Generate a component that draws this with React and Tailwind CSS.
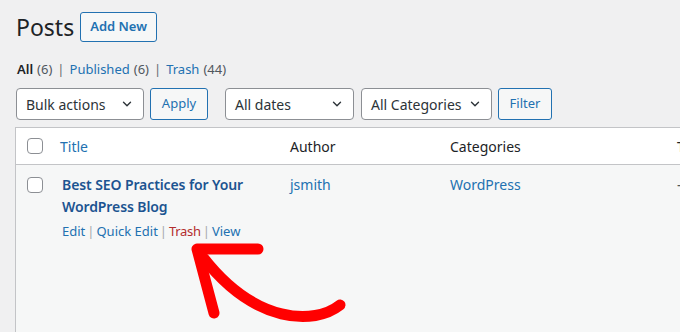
import React from "react";

const Chevron = () => (
  <svg width="14" height="14" viewBox="0 0 20 20" className="shrink-0">
    <path d="M5 7.5l5 5 5-5" fill="none" stroke="#2c3338" strokeWidth="2" strokeLinecap="round" strokeLinejoin="round" />
  </svg>
);

const Select = ({ label, w }) => (
  <div className={`${w} h-[32px] flex items-center justify-between pl-[9px] pr-[9px] bg-white border border-[#8c8f94] rounded-[4px] text-[14px] text-[#2c3338]`}>
    <span>{label}</span>
    <Chevron />
  </div>
);

const Btn = ({ label, w }) => (
  <div className={`${w} h-[32px] flex items-center justify-center bg-[#f6f7f7] border border-[#2271b1] rounded-[3px] text-[13px] text-[#2271b1]`}>
    {label}
  </div>
);

const Box = () => (
  <div className="w-[16px] h-[16px] bg-white border border-[#8c8f94] rounded-[4px]" />
);

const Pipe = ({ cls }) => <span className={cls}>|</span>;

export default function App() {
  return (
    <div
      className="relative w-[680px] h-[332px] overflow-hidden bg-[#f0f0f1] text-[#1d2327]"
      style={{ fontFamily: '"Noto Sans", sans-serif' }}
    >
      <div className="pl-[16px] pt-[12px] flex items-center">
        <h1 className="text-[23px] leading-[29px] font-normal text-[#1d2327]">Posts</h1>
        <div className="ml-[6px] h-[30px] px-[9px] flex items-center border border-[#2271b1] rounded-[3px] bg-[#f6f7f7] text-[13px] font-semibold text-[#2271b1]">
          Add New
        </div>
      </div>

      <div className="pl-[17px] mt-[17px] text-[13px] leading-[20px] text-[#50575e] flex items-center">
        <span className="text-[#1d2327] font-semibold">All</span>
        <span className="ml-[4px]">(6)</span>
        <Pipe cls="mx-[5px] text-[#646970]" />
        <span className="text-[#2271b1]">Published</span>
        <span className="ml-[4px]">(6)</span>
        <Pipe cls="mx-[5px] text-[#646970]" />
        <span className="text-[#2271b1]">Trash</span>
        <span className="ml-[4px]">(44)</span>
      </div>

      <div className="pl-[16px] mt-[9px] flex items-center">
        <Select label="Bulk actions" w="w-[128px]" />
        <div className="ml-[6px]"><Btn label="Apply" w="w-[58px]" /></div>
        <div className="ml-[17px]"><Select label="All dates" w="w-[129px]" /></div>
        <div className="ml-[7px]"><Select label="All Categories" w="w-[131px]" /></div>
        <div className="ml-[6px]"><Btn label="Filter" w="w-[54px]" /></div>
      </div>

      <div className="ml-[15px] mt-[7px] w-[700px] border border-[#c3c4c7] bg-[#f6f7f7]">
        <div className="h-[37px] bg-white border-b border-[#c3c4c7] flex items-center text-[14px]">
          <div className="pl-[11px] w-[44px]"><Box /></div>
          <div className="w-[230px] text-[#2271b1]">Title</div>
          <div className="w-[160px]">Author</div>
          <div className="w-[227px]">Categories</div>
          <div>Tags</div>
        </div>
        <div className="h-[180px] flex items-start text-[14px]">
          <div className="pl-[11px] pt-[12px] w-[46px]"><Box /></div>
          <div className="w-[228px] pt-[9px]">
            <div className="text-[#1c5491] font-semibold leading-[22px] tracking-[-0.1px]">
              Best SEO Practices for Your<br />WordPress Blog
            </div>
            <div className="mt-[3px] flex items-center text-[13px] leading-[20px] text-[#2271b1]">
              <span>Edit</span>
              <Pipe cls="mx-[2px] text-[#a7aaad]" />
              <span>Quick Edit</span>
              <Pipe cls="mx-[2px] text-[#a7aaad]" />
              <span className="text-[#b32d2e] tracking-[-0.3px]">Trash</span>
              <Pipe cls="mx-[2px] text-[#a7aaad]" />
              <span>View</span>
            </div>
          </div>
          <div className="w-[160px] pt-[9px] leading-[22px] text-[#2271b1]">jsmith</div>
          <div className="w-[227px] pt-[9px] leading-[22px] text-[#2271b1]">WordPress</div>
          <div className="pt-[9px] leading-[22px] text-[#50575e]">—</div>
        </div>
      </div>

      <svg className="absolute left-0 top-0 pointer-events-none" width="680" height="332" viewBox="0 0 680 332">
        <g fill="none" stroke="#ff0000" strokeLinecap="round" strokeLinejoin="round">
          <path d="M340 305 C 315 325, 255 325, 202 256" strokeWidth="11" />
          <path d="M214 313 L 197 249 L 258 249" strokeWidth="11" />
        </g>
      </svg>
    </div>
  );
}
